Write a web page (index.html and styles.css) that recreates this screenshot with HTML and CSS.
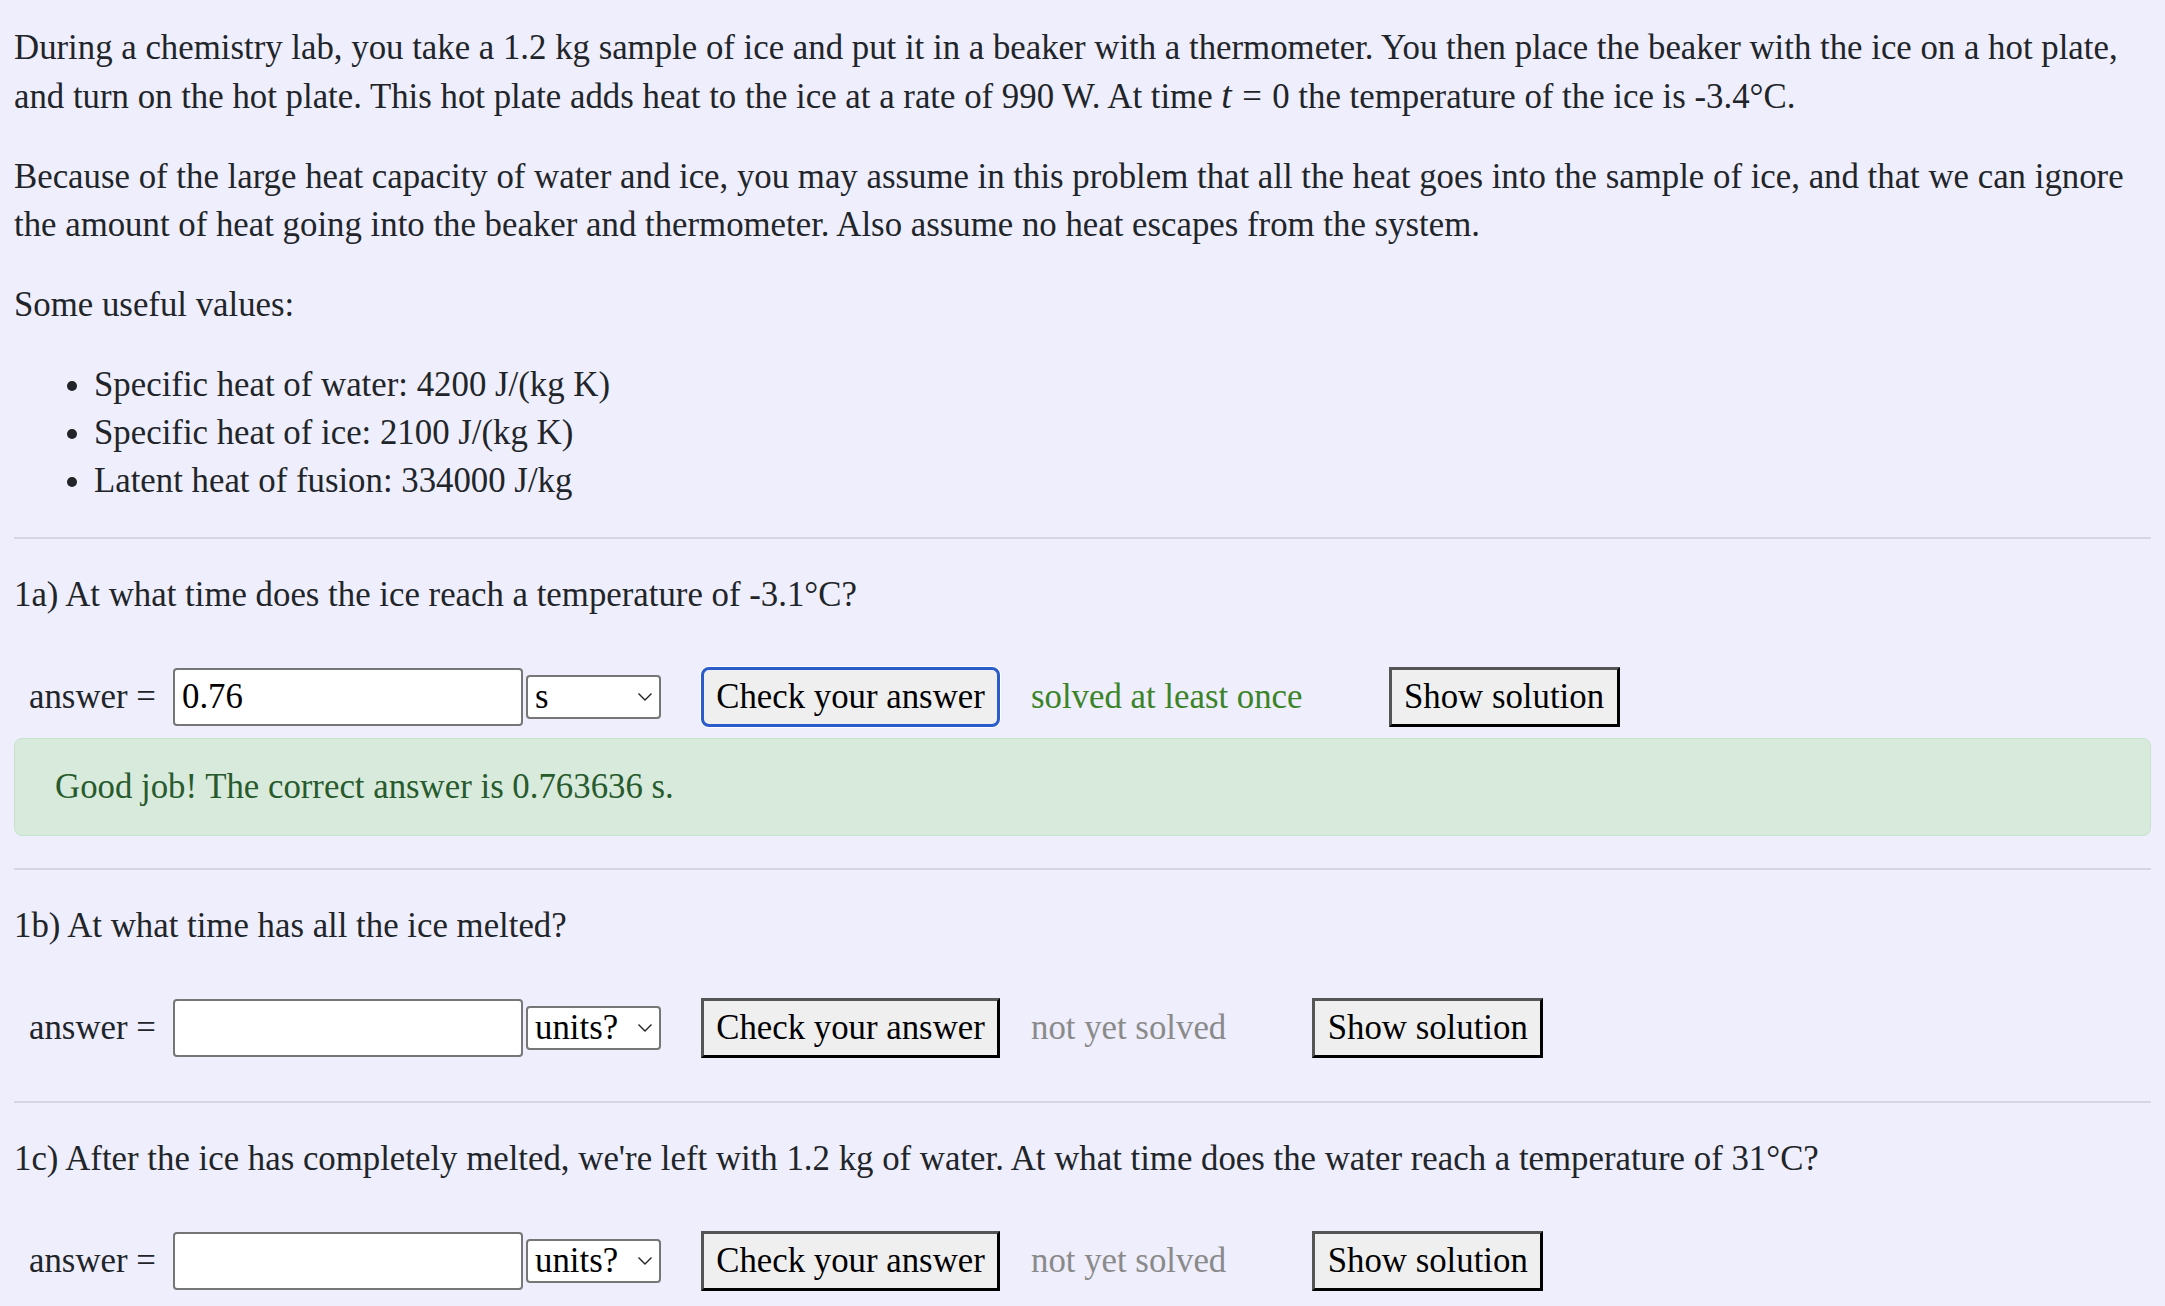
FILE: index.html
```html
<!DOCTYPE html>
<html lang="en">
<head>
<meta charset="utf-8">
<title>Heating ice</title>
<link rel="stylesheet" href="styles.css">
</head>
<body>
<main class="page">
  <p class="intro">During a chemistry lab, you take a 1.2 kg sample of ice and put it in a beaker with a thermometer. You then place the beaker with the ice on a hot plate, and turn on the hot plate. This hot plate adds heat to the ice at a rate of 990 W. At time <span class="math"><i>t</i><span class="rel">=</span>0</span> the temperature of the ice is -3.4°C.</p>
  <p>Because of the large heat capacity of water and ice, you may assume in this problem that all the heat goes into the sample of ice, and that we can ignore the amount of heat going into the beaker and thermometer. Also assume no heat escapes from the system.</p>
  <p>Some useful values:</p>
  <ul class="values">
    <li>Specific heat of water: 4200 J/(kg K)</li>
    <li>Specific heat of ice: 2100 J/(kg K)</li>
    <li>Latent heat of fusion: 334000 J/kg</li>
  </ul>
  <hr>
  <section class="part">
    <p class="question">1a) At what time does the ice reach a temperature of -3.1°C?</p>
    <div class="answer-row">
      <span class="label">answer =</span>
      <input class="answer-input" type="text" value="0.76">
      <span class="unit">
        <select class="unit-select"><option>s</option><option>units?</option></select>
        <svg class="chevron" width="16" height="10" viewBox="0 0 16 10"><path d="M1.5 1.5 L8 8 L14.5 1.5" fill="none" stroke="#222" stroke-width="1.4"/></svg>
      </span>
      <button class="btn check focused" type="button">Check your answer</button>
      <span class="status solved">solved at least once</span>
      <button class="btn show" type="button">Show solution</button>
    </div>
    <div class="alert">Good job! The correct answer is 0.763636 s.</div>
  </section>
  <hr>
  <section class="part">
    <p class="question">1b) At what time has all the ice melted?</p>
    <div class="answer-row">
      <span class="label">answer =</span>
      <input class="answer-input" type="text" value="">
      <span class="unit">
        <select class="unit-select"><option>units?</option><option>s</option></select>
        <svg class="chevron" width="16" height="10" viewBox="0 0 16 10"><path d="M1.5 1.5 L8 8 L14.5 1.5" fill="none" stroke="#222" stroke-width="1.4"/></svg>
      </span>
      <button class="btn check" type="button">Check your answer</button>
      <span class="status unsolved">not yet solved</span>
      <button class="btn show" type="button">Show solution</button>
    </div>
  </section>
  <hr>
  <section class="part">
    <p class="question">1c) After the ice has completely melted, we're left with 1.2 kg of water. At what time does the water reach a temperature of 31°C?</p>
    <div class="answer-row">
      <span class="label">answer =</span>
      <input class="answer-input" type="text" value="">
      <span class="unit">
        <select class="unit-select"><option>units?</option><option>s</option></select>
        <svg class="chevron" width="16" height="10" viewBox="0 0 16 10"><path d="M1.5 1.5 L8 8 L14.5 1.5" fill="none" stroke="#222" stroke-width="1.4"/></svg>
      </span>
      <button class="btn check" type="button">Check your answer</button>
      <span class="status unsolved">not yet solved</span>
      <button class="btn show" type="button">Show solution</button>
    </div>
  </section>
</main>
</body>
</html>
```
FILE: styles.css
```css
html, body {
  margin: 0;
  background: #eeeefc;
}

body {
  font-family: "Liberation Serif", "Times New Roman", serif;
  font-size: 34.8px;
  line-height: 48px;
  color: #212529;
}

.page {
  padding: 0 14px;
}

p {
  margin: 32px 0;
}

.page > p.intro {
  margin-top: 24px;
}

.math {
  white-space: nowrap;
}

.math i {
  font-style: italic;
  font-size: 1.08em;
}

.math .rel {
  margin: 0 0.3em;
}

.values {
  margin: 32px 0;
  padding-left: 80px;
}

hr {
  border: 0;
  border-top: 2px solid #d6d6e3;
  margin: 0;
  height: 0;
}

.part {
  padding-bottom: 32px;
}

.answer-row {
  display: flex;
  align-items: center;
  padding: 16px 0 11px 15px;
}

.label {
  width: 144px;
  flex: none;
}

.answer-input {
  box-sizing: border-box;
  width: 350px;
  height: 58px;
  border: 2px solid #767676;
  border-radius: 4px;
  background: #fff;
  font: inherit;
  color: #000;
  padding: 0 7px;
  margin: 0;
}

.unit {
  position: relative;
  margin-left: 3px;
  display: flex;
}

.unit-select {
  -webkit-appearance: none;
  appearance: none;
  box-sizing: border-box;
  width: 135px;
  height: 44px;
  border: 2px solid #767676;
  border-radius: 4px;
  background: #fff;
  font: inherit;
  line-height: 40px;
  color: #000;
  padding: 0 0 0 7px;
  margin: 0;
}

.chevron {
  position: absolute;
  right: 8px;
  top: 17px;
  pointer-events: none;
}

.btn {
  box-sizing: border-box;
  height: 60px;
  font: inherit;
  line-height: 1;
  color: #000;
  background: #efefef;
  border-style: solid;
  border-width: 3px;
  border-color: #555 #000 #000 #555;
  border-radius: 0;
  padding: 0;
  margin: 0;
}

.check {
  width: 299px;
  margin-left: 40px;
}

.check.focused {
  border: 3px solid #2b5cc9;
  border-radius: 8px;
  box-shadow: 0 0 0 1px #fff;
}

.status {
  margin-left: 31px;
}

.solved {
  color: #3a8427;
}

.unsolved {
  color: #8a8a8a;
}

.show {
  width: 231px;
  margin-left: 86px;
}

.alert {
  background: #d8eadc;
  border: 1px solid #c5e3cc;
  border-radius: 8px;
  padding: 24px 40px;
  color: #275a2c;
}
```
